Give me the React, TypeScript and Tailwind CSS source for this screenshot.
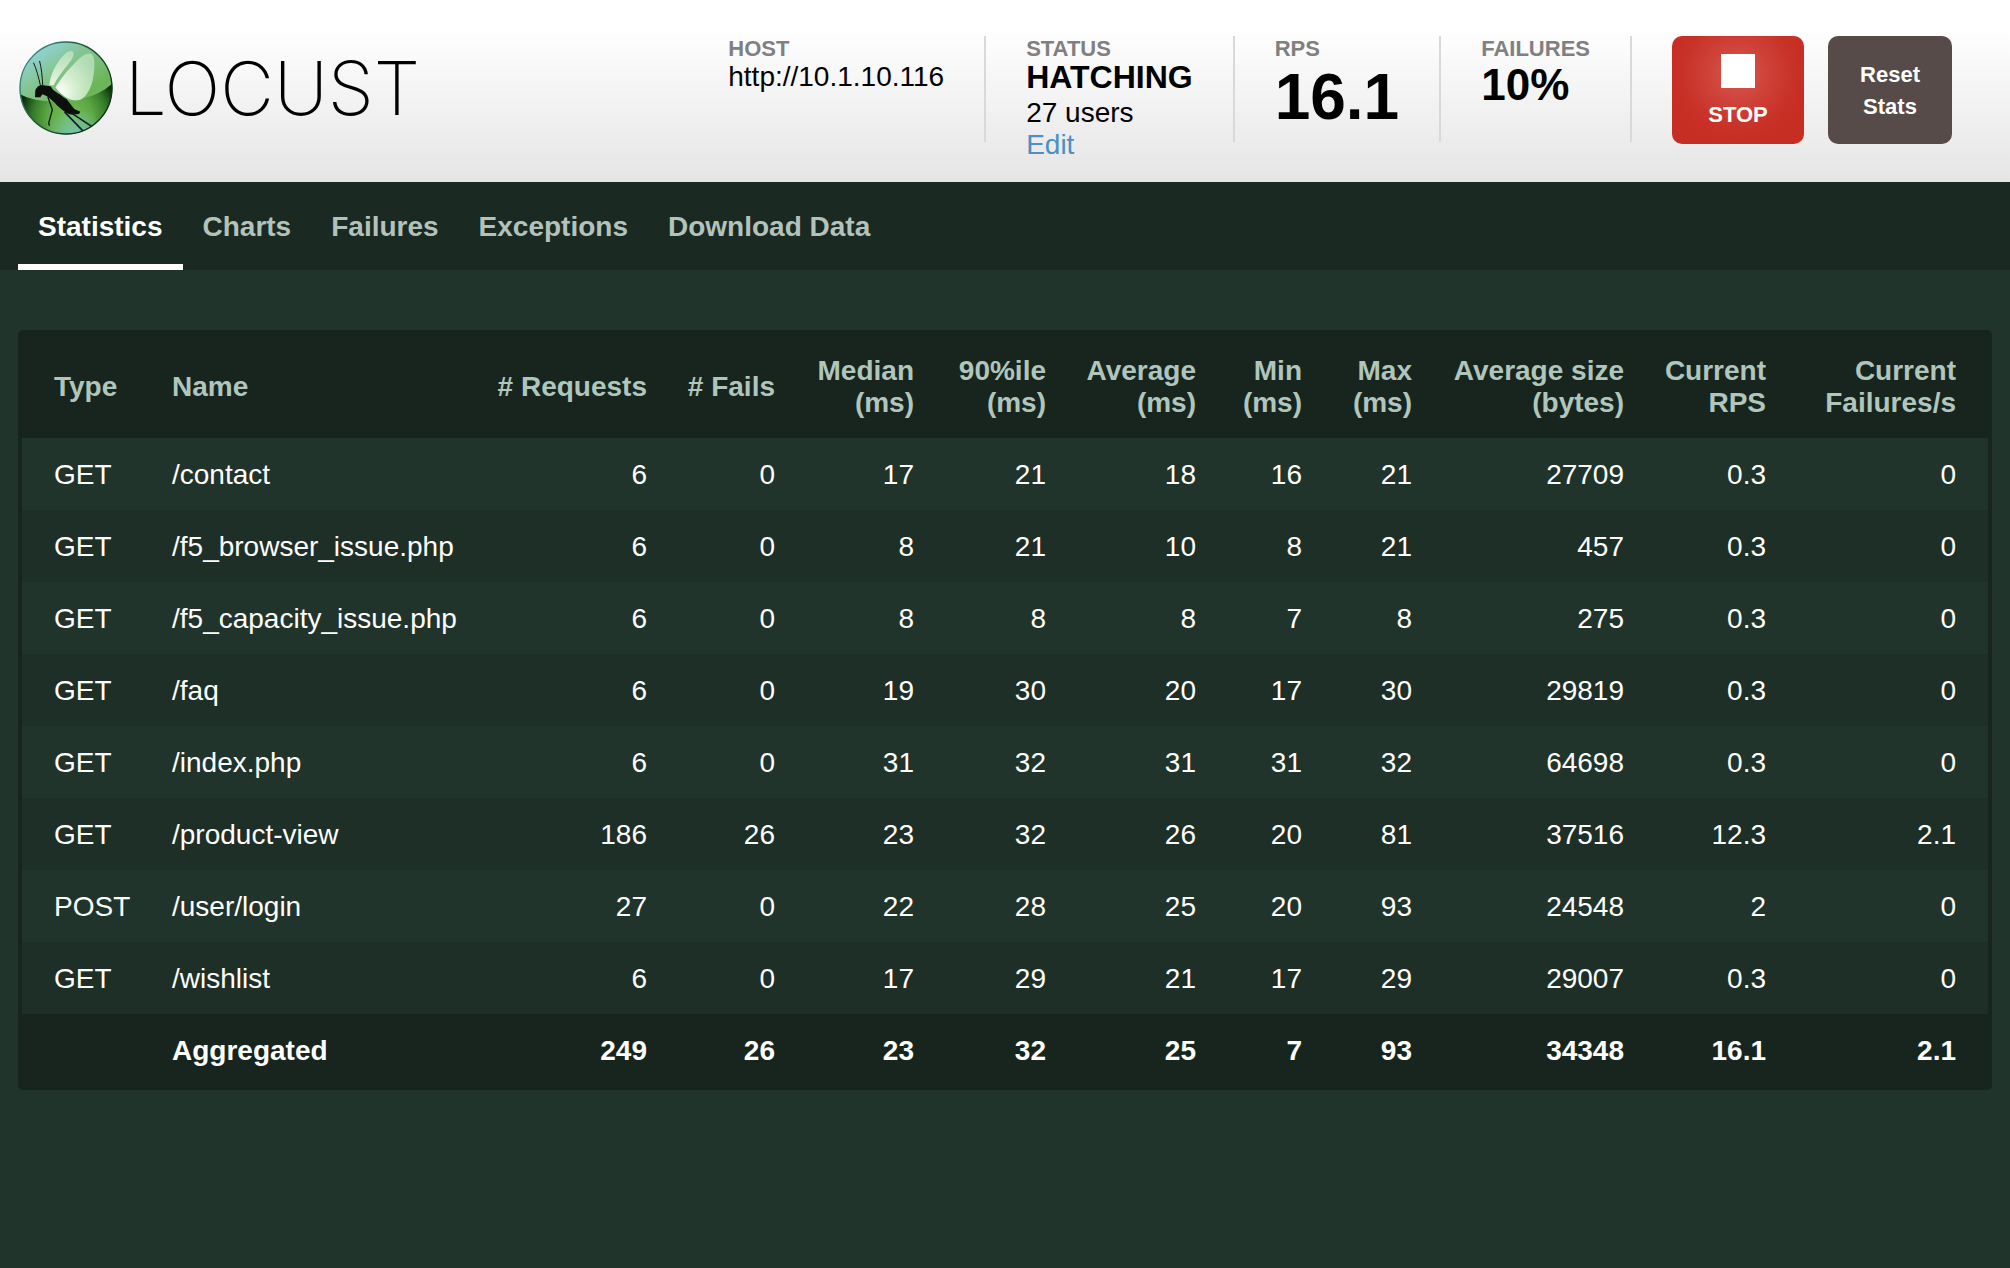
import React from "react";

type Row = { type: string; name: string; values: string[] };

const columns: { lines: string[]; width: string; align: string }[] = [
  { lines: ["Type"], width: "w-[130px]", align: "pl-8 pr-0 text-left" },
  { lines: ["Name"], width: "w-[324px]", align: "px-5 text-left" },
  { lines: ["# Requests"], width: "w-[191px]", align: "px-5 text-right" },
  { lines: ["# Fails"], width: "w-[128px]", align: "px-5 text-right" },
  { lines: ["Median", "(ms)"], width: "w-[139px]", align: "px-5 text-right" },
  { lines: ["90%ile", "(ms)"], width: "w-[132px]", align: "px-5 text-right" },
  { lines: ["Average", "(ms)"], width: "w-[150px]", align: "px-5 text-right" },
  { lines: ["Min", "(ms)"], width: "w-[106px]", align: "px-5 text-right" },
  { lines: ["Max", "(ms)"], width: "w-[110px]", align: "px-5 text-right" },
  { lines: ["Average size", "(bytes)"], width: "w-[212px]", align: "px-5 text-right" },
  { lines: ["Current", "RPS"], width: "w-[142px]", align: "px-5 text-right" },
  { lines: ["Current", "Failures/s"], width: "w-[202px]", align: "pl-5 pr-8 text-right" },
];

const rows: Row[] = [
  { type: "GET", name: "/contact", values: ["6", "0", "17", "21", "18", "16", "21", "27709", "0.3", "0"] },
  { type: "GET", name: "/f5_browser_issue.php", values: ["6", "0", "8", "21", "10", "8", "21", "457", "0.3", "0"] },
  { type: "GET", name: "/f5_capacity_issue.php", values: ["6", "0", "8", "8", "8", "7", "8", "275", "0.3", "0"] },
  { type: "GET", name: "/faq", values: ["6", "0", "19", "30", "20", "17", "30", "29819", "0.3", "0"] },
  { type: "GET", name: "/index.php", values: ["6", "0", "31", "32", "31", "31", "32", "64698", "0.3", "0"] },
  { type: "GET", name: "/product-view", values: ["186", "26", "23", "32", "26", "20", "81", "37516", "12.3", "2.1"] },
  { type: "POST", name: "/user/login", values: ["27", "0", "22", "28", "25", "20", "93", "24548", "2", "0"] },
  { type: "GET", name: "/wishlist", values: ["6", "0", "17", "29", "21", "17", "29", "29007", "0.3", "0"] },
];

const total: Row = {
  type: "",
  name: "Aggregated",
  values: ["249", "26", "23", "32", "25", "7", "93", "34348", "16.1", "2.1"],
};

const tabs = ["Statistics", "Charts", "Failures", "Exceptions", "Download Data"];

function LogoMark() {
  return (
    <svg viewBox="27 33 282 282" className="size-[94px] shrink-0" aria-hidden="true">
      <defs>
        <linearGradient id="orb" gradientUnits="userSpaceOnUse" x1="75" y1="60" x2="185" y2="220">
          <stop offset="0" stopColor="#8fd3dc" />
          <stop offset="0.4" stopColor="#86c594" />
          <stop offset="1" stopColor="#6cb558" />
        </linearGradient>
        <radialGradient id="shade" gradientUnits="userSpaceOnUse" cx="180" cy="262" r="150">
          <stop offset="0" stopColor="#74bd55" />
          <stop offset="0.45" stopColor="#5fa944" />
          <stop offset="0.75" stopColor="#357a29" />
          <stop offset="1" stopColor="#0b2f0c" />
        </radialGradient>
        <linearGradient id="rim" x1="0" y1="0" x2="1" y2="0.6">
          <stop offset="0" stopColor="#4d9d9c" />
          <stop offset="0.5" stopColor="#1b5a3c" />
          <stop offset="1" stopColor="#0c3319" />
        </linearGradient>
        <radialGradient id="aqua" gradientUnits="userSpaceOnUse" cx="195" cy="330" r="95">
          <stop offset="0" stopColor="#7cc9c6" />
          <stop offset="1" stopColor="#7cc9c6" stopOpacity="0" />
        </radialGradient>
        <radialGradient id="wing" gradientUnits="userSpaceOnUse" cx="150" cy="185" r="125">
          <stop offset="0" stopColor="#ffffff" />
          <stop offset="0.4" stopColor="#e6f6e0" stopOpacity="0.85" />
          <stop offset="1" stopColor="#c3e8c6" stopOpacity="0.7" />
        </radialGradient>
        <clipPath id="orbClip">
          <circle cx="168" cy="174" r="139" />
        </clipPath>
      </defs>
      <circle cx="168" cy="174" r="139" fill="url(#orb)" />
      <g clipPath="url(#orbClip)">
        <path d="M20 186C60 214 120 218 180 212C240 206 285 186 315 152V330H20Z" fill="url(#shade)" />
        <circle cx="195" cy="330" r="95" fill="url(#aqua)" />
      </g>
      <path d="M118 166C119 138 140 92 168 69C178 61 190 61 191 70C192 80 184 92 172 106C158 123 143 142 131 166Z" fill="url(#wing)" />
      <path d="M136 172C153 144 176 116 207 86C220 73 240 65 247 74C256 86 255 122 247 155C239 184 224 207 204 211C184 214 160 203 136 172Z" fill="url(#wing)" />
      <path
        d="M75 202L76 180C80 172 86 166 95 165L122 169L129 179C145 190 158 199 170 208L193 237L211 245L207 252C197 253 186 255 174 251C158 242 143 229 132 216L110 198L97 193L91 202Z"
        fill="#0d0f0d"
      />
      <g fill="none" stroke="#111a18" strokeLinecap="round" strokeLinejoin="round">
        <path d="M91 165C86 142 79 117 71 99" strokeWidth="3" />
        <path d="M98 164C97 138 94 114 89 94" strokeWidth="3" />
        <path d="M114 202L127 239L116 280L118 286" strokeWidth="4" />
      </g>
      <g fill="none" stroke="#101c30" strokeWidth="5" strokeLinecap="round" strokeLinejoin="round" clipPath="url(#orbClip)">
        <path d="M165 247L218 302" />
        <path d="M186 250L246 290" />
      </g>
      <circle cx="168" cy="174" r="138" fill="none" stroke="url(#rim)" strokeWidth="4" />
    </svg>
  );
}

function Stat({ label, children }: { label: string; children: React.ReactNode }) {
  return (
    <section className="h-[106px] whitespace-nowrap border-r-2 border-[#d9d9d9] px-10 pt-px">
      <h2 className="text-[22px] leading-6 font-bold text-[#808080]">{label}</h2>
      {children}
    </section>
  );
}

function Cells({ row }: { row: Row }) {
  return (
    <>
      {[row.type, row.name, ...row.values].map((value, i) => (
        <td key={i} className={"pt-[21px] pb-[19px] " + columns[i].align}>
          {value}
        </td>
      ))}
    </>
  );
}

export default function App() {
  return (
    <div className="min-h-screen bg-[#20342b] font-['Liberation_Sans',Arial,sans-serif] text-[28px] leading-8 text-white">
      <header className="flex items-start justify-between bg-linear-to-b from-white from-15% to-[#e5e5e5] pt-9 pr-[58px] pb-[38px] pl-[19px] text-black">
        <a href="#home" className="flex items-center gap-3 pt-[5px]" aria-label="Locust">
          <LogoMark />
          <span className="font-['Inter',sans-serif] text-[74px] leading-[72px] font-extralight">LOCUST</span>
        </a>
        <div className="flex items-start">
          <Stat label="HOST">
            <p>http://10.1.10.116</p>
          </Stat>
          <Stat label="STATUS">
            <p className="mb-1 text-[32px] leading-8 font-bold">HATCHING</p>
            <p>27 users</p>
            <a href="#edit" className="block text-[#4a90c2]">Edit</a>
          </Stat>
          <Stat label="RPS">
            <p className="text-[64px] leading-[72px] font-bold">16.1</p>
          </Stat>
          <Stat label="FAILURES">
            <p className="text-[44px] leading-[48px] font-bold">10%</p>
          </Stat>
          <button
            type="button"
            className="ml-10 flex h-[108px] w-[132px] flex-col items-center gap-[11px] rounded-[10px] bg-[radial-gradient(circle_at_50%_35%,#d65a50_0px,#cf433a_28px,#c83127_56px,#c62d23_80px)] pt-[18px] text-[22px] font-bold text-white"
          >
            <span className="size-[34px] bg-white" />
            STOP
          </button>
          <button
            type="button"
            className="ml-6 h-[108px] w-[124px] rounded-[10px] bg-[#574b49] px-6 pt-0.5 text-[22px] font-bold text-white"
          >
            Reset Stats
          </button>
        </div>
      </header>

      <nav className="flex bg-[#1a2922] px-[18px] font-bold">
        {tabs.map((tab, i) => (
          <a
            key={tab}
            href={"#" + tab.toLowerCase().replace(" ", "-")}
            aria-current={i === 0 ? "page" : undefined}
            className={
              i === 0
                ? "border-b-[6px] border-white px-5 pt-[29px] pb-[21px] text-white"
                : "border-b-[6px] border-transparent px-5 pt-[29px] pb-[21px] text-[#b3c3bc]"
            }
          >
            {tab}
          </a>
        ))}
      </nav>

      <main className="px-[18px] pt-[60px]">
        <div className="rounded-[5px] bg-[#17251e] p-1">
          <table className="w-full table-fixed border-collapse whitespace-nowrap">
            <thead>
              <tr>
                {columns.map((col, i) => (
                  <th
                    key={i}
                    scope="col"
                    className={"pt-[21px] pb-[19px] font-bold text-[#b0c6bc] " + col.width + " " + col.align}
                  >
                    {col.lines.map((line) => (
                      <span key={line} className="block">{line}</span>
                    ))}
                  </th>
                ))}
              </tr>
            </thead>
            <tbody>
              {rows.map((row) => (
                <tr key={row.name} className="odd:bg-[#20342b] even:bg-[#1d2f27]">
                  <Cells row={row} />
                </tr>
              ))}
            </tbody>
            <tfoot>
              <tr className="font-bold">
                <Cells row={total} />
              </tr>
            </tfoot>
          </table>
        </div>
      </main>
    </div>
  );
}
